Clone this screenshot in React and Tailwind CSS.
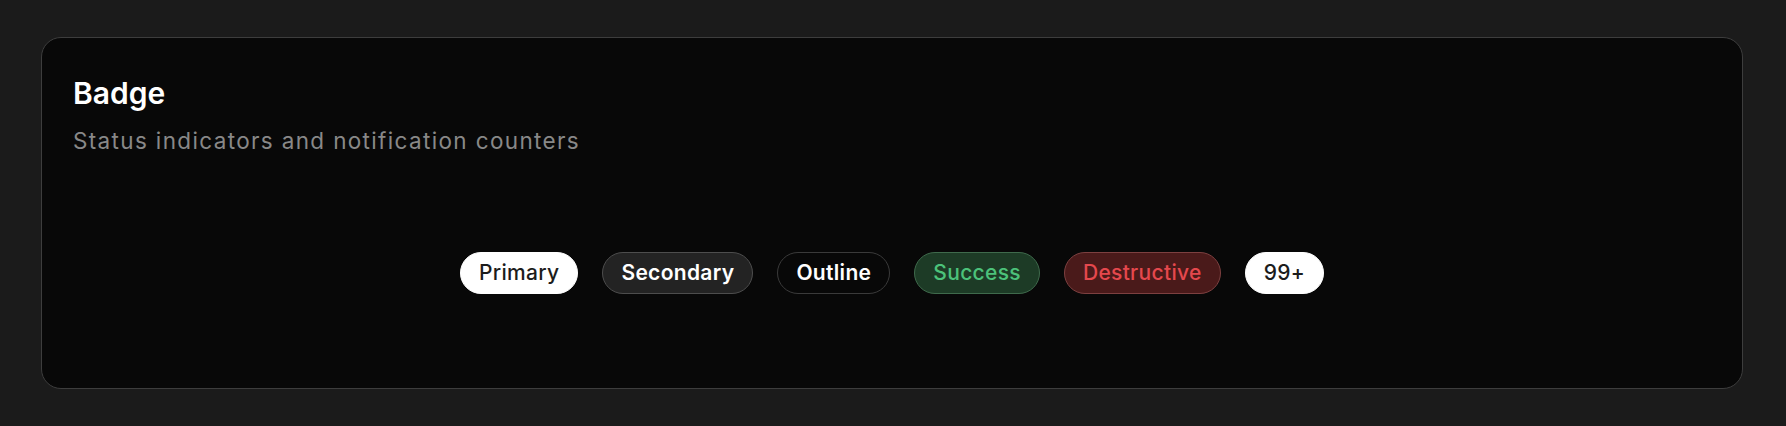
const BADGES = [
  { label: 'Primary', className: 'bg-white border-white text-[#1c1c1c] font-medium' },
  { label: 'Secondary', className: 'bg-[#232323] border-[#4d4d4d] text-white font-semibold' },
  { label: 'Outline', className: 'bg-transparent border-[#3a3a3a] text-white font-semibold' },
  { label: 'Success', className: 'bg-[#1d3b26] border-[#3f6a4c] text-[#4cc27a] font-medium' },
  { label: 'Destructive', className: 'bg-[#4a1a1a] border-[#7d4040] text-[#e5484d] font-medium' },
  { label: '99+', className: 'bg-white border-white text-[#1c1c1c] font-medium' },
];

function Badge({ label, className }) {
  return (
    <span
      className={`inline-flex items-center rounded-full border px-[18px] py-[6px] text-[21px] leading-[28px] tracking-[0.015em] ${className}`}
    >
      {label}
    </span>
  );
}

export default function App() {
  return (
    <div className="h-[426px] w-full bg-[#1b1b1b] pl-[41px] pr-[43px] pt-[37px] font-['Inter',sans-serif]">
      <div className="h-[352px] rounded-[20px] border border-[#3d3d3d] bg-[#080808] px-[31px] pt-[37px]">
        <h2 className="text-[30px] leading-[36px] font-semibold text-white">Badge</h2>
        <p className="mt-[14px] text-[22.5px] leading-[32px] tracking-[0.06em] text-[#888888]">
          Status indicators and notification counters
        </p>
        <div className="mt-[95px] flex items-center justify-center gap-6">
          {BADGES.map((b) => (
            <Badge key={b.label} label={b.label} className={b.className} />
          ))}
        </div>
      </div>
    </div>
  );
}
